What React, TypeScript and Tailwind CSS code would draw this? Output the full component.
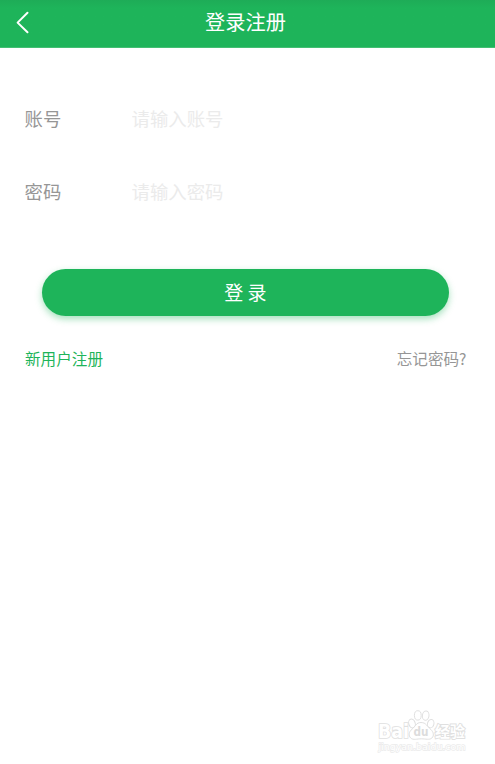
import React from "react";

function Field({ label, placeholder, type }: { label: string; placeholder: string; type: string }) {
  return (
    <label className="flex h-[73px] items-center pl-[24.5px] text-[18.4px] leading-[28px]">
      <span className="w-[107px] shrink-0 text-[#969696]">{label}</span>
      <input
        type={type}
        placeholder={placeholder}
        className="h-[28px] min-w-0 flex-1 bg-transparent text-[#666] outline-none placeholder:text-[#ebebeb] placeholder:opacity-100"
      />
    </label>
  );
}

function Watermark() {
  return (
    <svg width="96" height="48" viewBox="0 0 96 48" className="block overflow-visible" fill="#fff" stroke="#e0e0e0" strokeWidth="1">
      <ellipse cx="39" cy="15.5" rx="3.2" ry="4.5" transform="rotate(-18 39 15.5)" />
      <ellipse cx="44.8" cy="7.4" rx="3.4" ry="4.7" />
      <ellipse cx="52.7" cy="7.6" rx="3.3" ry="4.6" transform="rotate(8 52.7 7.6)" />
      <ellipse cx="57.7" cy="15.7" rx="3.2" ry="4.3" transform="rotate(15 57.7 15.7)" />
      <path d="M48 14.5c-5 0-5.7 4.2-9.1 6.8-3 2.3-3.7 6.5-1.2 8.7 2.6 2.4 6.3.8 10.6.8s8 1.5 10.6-.8c2.5-2.3 1.6-6.1-1.2-8.6-3.4-2.8-4.6-6.9-9.7-6.9z" />
      <text x="5" y="29.5" fontFamily="'DejaVu Sans', sans-serif" fontWeight="700" fontSize="19" textLength="31" lengthAdjust="spacingAndGlyphs" strokeWidth="1.6" paintOrder="stroke">Bai</text>
      <text x="40.5" y="28" fontFamily="'DejaVu Sans', sans-serif" fontWeight="700" fontSize="11.5" textLength="15" lengthAdjust="spacingAndGlyphs" fill="#dcdcdc" stroke="none">du</text>
      <text x="62" y="28.6" fontFamily="'Noto Sans CJK SC', sans-serif" fontWeight="700" fontSize="15" textLength="30" lengthAdjust="spacingAndGlyphs" strokeWidth="1.8" paintOrder="stroke">经验</text>
      <text x="5.5" y="41.5" fontFamily="'DejaVu Sans', sans-serif" fontSize="9.5" textLength="87" lengthAdjust="spacingAndGlyphs" stroke="#ebebeb" strokeWidth="1.4" paintOrder="stroke">
        jingyan.baidu.com
      </text>
    </svg>
  );
}

export default function App() {
  return (
    <div className="flex h-[764px] w-[495px] flex-col overflow-hidden bg-white font-['Noto_Sans_CJK_SC',sans-serif]">
      <header className="grid h-[48px] shrink-0 grid-cols-[48px_1fr_48px] items-center border-b border-[#43bf73] bg-linear-to-b from-[#1eac57] to-[#1eb45a] to-[8px]">
        <button aria-label="返回" className="pb-[3px] pl-[15px]">
          <svg width="16" height="24" viewBox="0 0 16 24" fill="none" stroke="#fff" strokeWidth="2" strokeLinecap="round" strokeLinejoin="round">
            <path d="M12.5 2.8 2.6 12.6l9.9 9.7" />
          </svg>
        </button>
        <h1 className="pb-[3px] pr-[4px] text-center text-[20.2px] leading-[30px] text-white">登录注册</h1>
      </header>
      <main className="flex flex-1 flex-col">
        <form className="flex flex-col pt-[33px]">
          <Field label="账号" placeholder="请输入账号" type="text" />
          <Field label="密码" placeholder="请输入密码" type="password" />
          <button
            type="button"
            className="mr-[46px] ml-[42px] mt-[42px] h-[47px] rounded-full bg-[#1eb45a] pb-px text-[19px] leading-[46px] text-white shadow-[0_3px_7px_rgba(30,180,90,0.4)]"
          >
            登 录
          </button>
        </form>
        <div className="mt-[30px] flex justify-between pr-[28.5px] pl-[25px] text-[15.6px] leading-[24px]">
          <a className="text-[#1eb45a]">新用户注册</a>
          <a className="text-[#969696]">忘记密码?</a>
        </div>
        <footer className="mt-auto flex justify-end pr-[26px] pb-[8px]">
          <Watermark />
        </footer>
      </main>
    </div>
  );
}
